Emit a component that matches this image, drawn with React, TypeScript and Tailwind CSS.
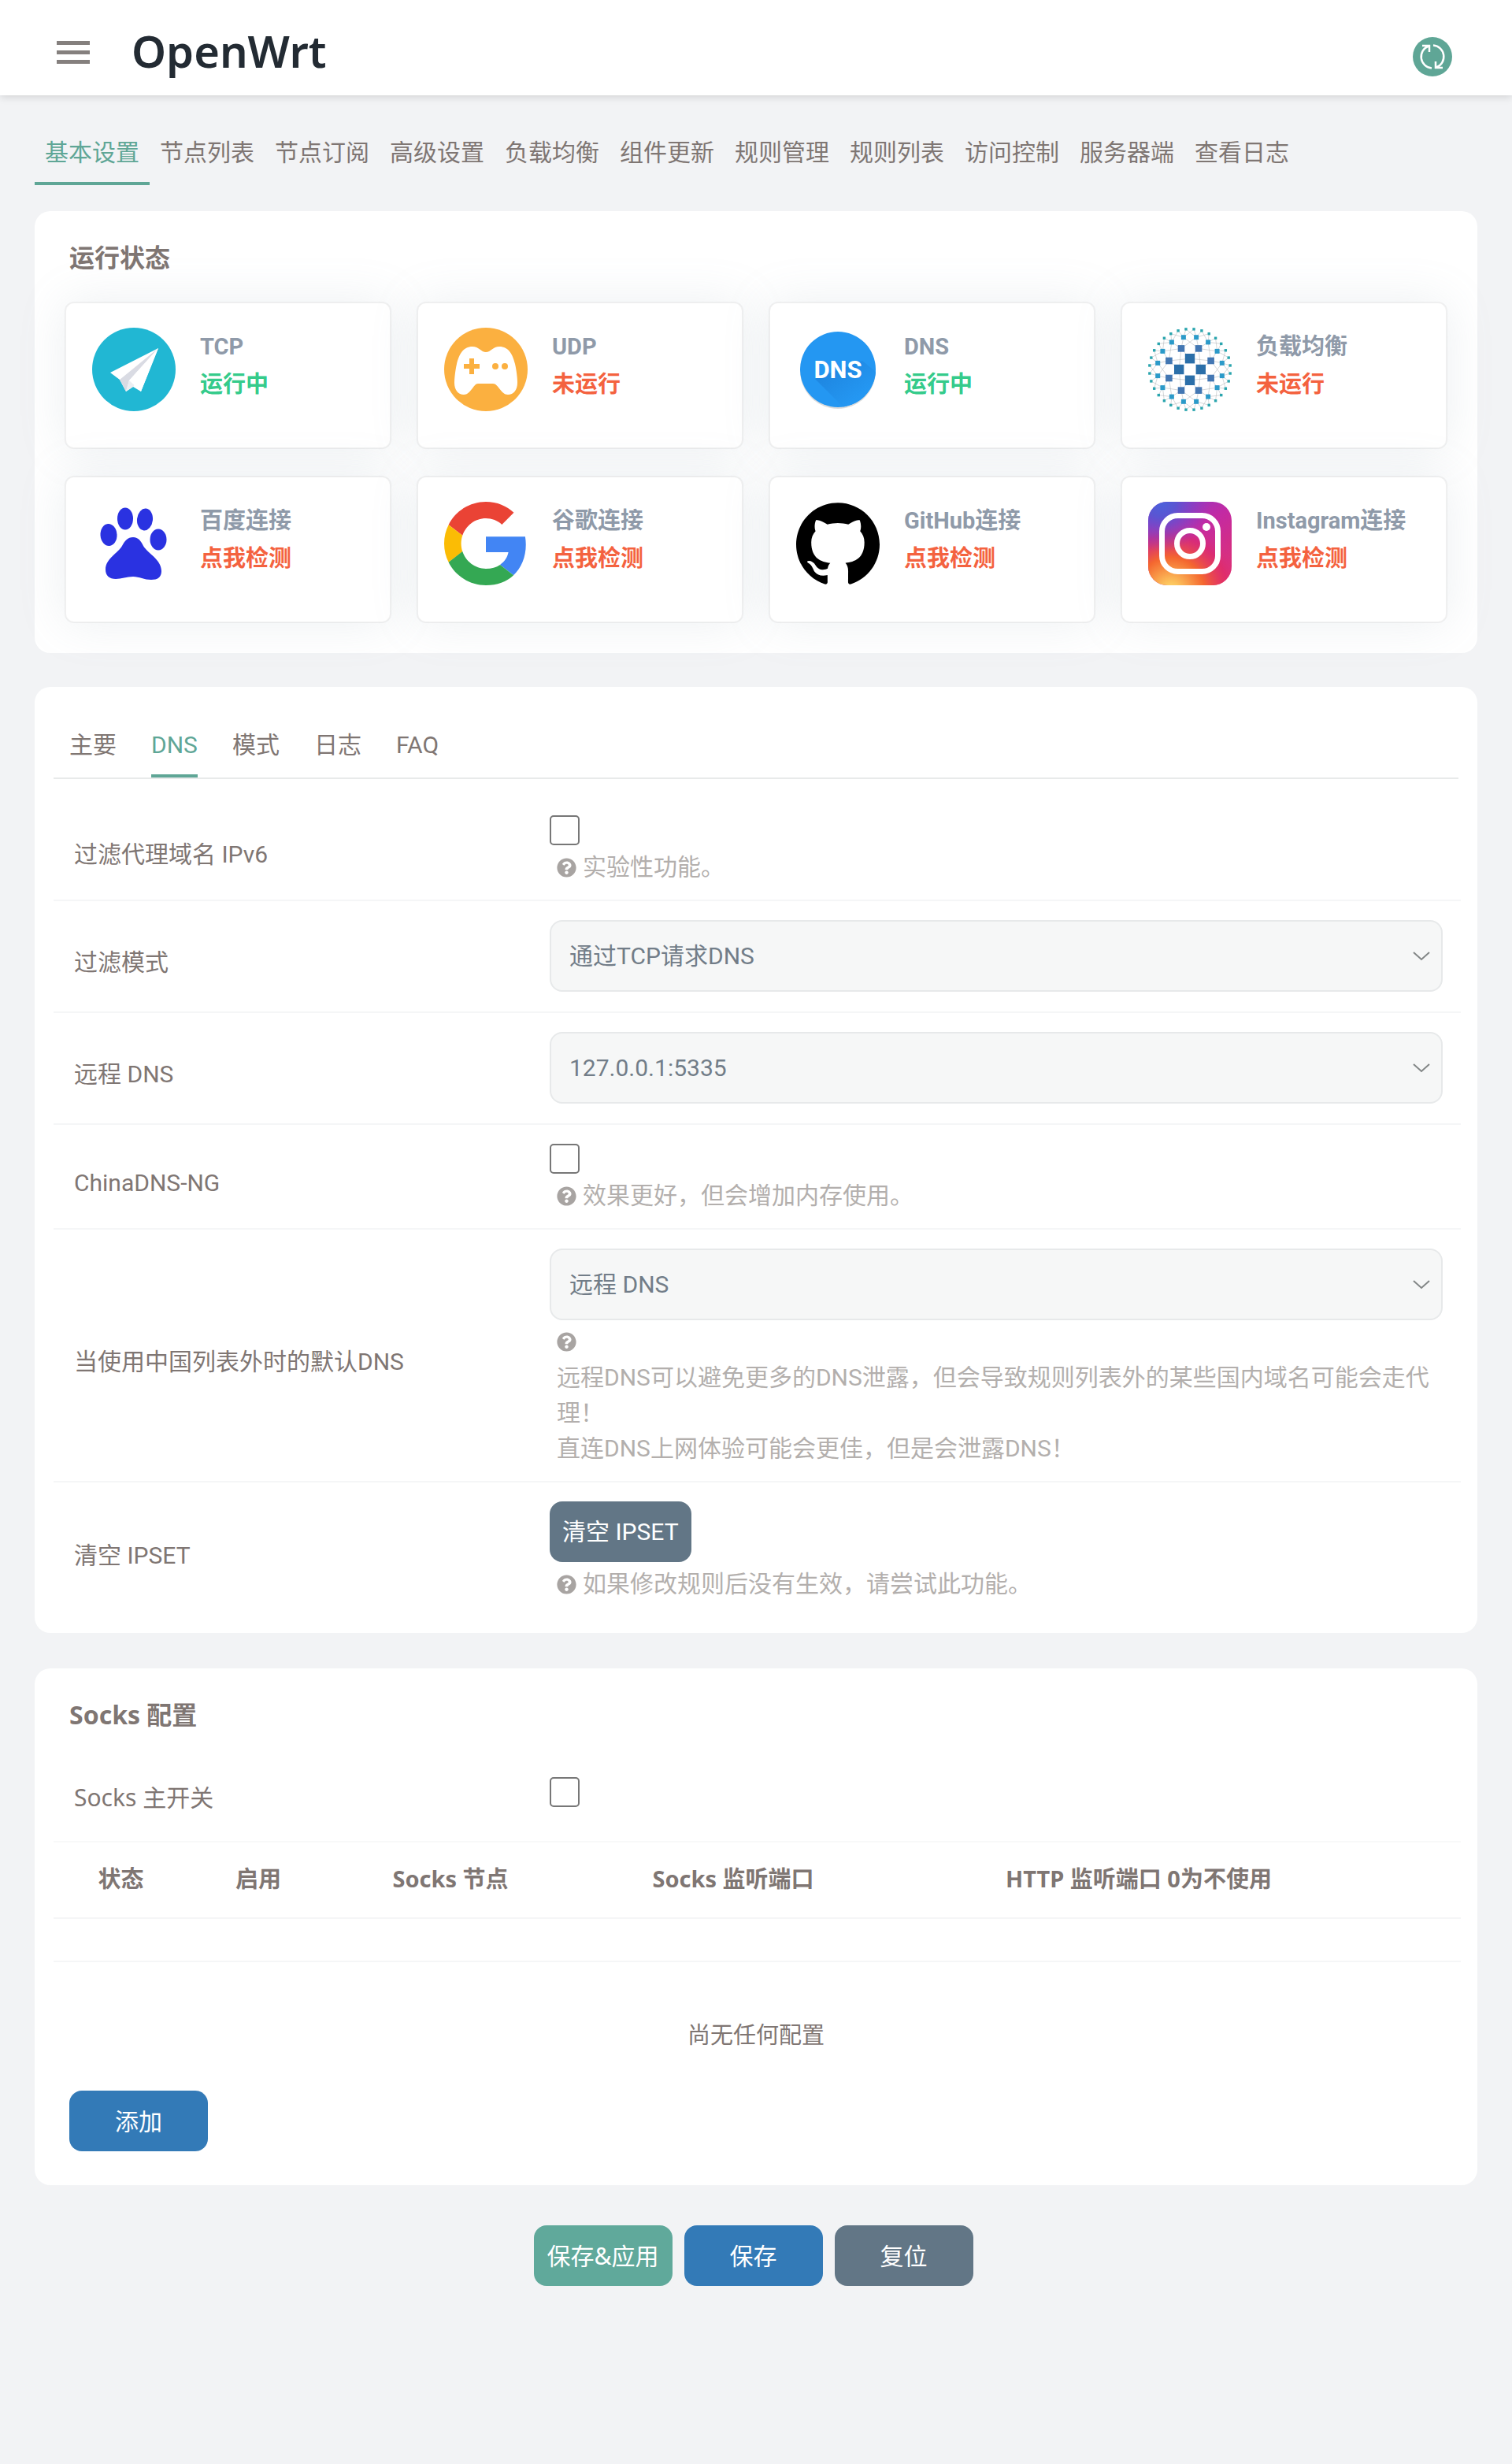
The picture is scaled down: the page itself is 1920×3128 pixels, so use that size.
import { useId, type ReactNode } from 'react';
import { FaQuestionCircle } from 'react-icons/fa';
import { SiGithub } from 'react-icons/si';

const NAV = ['基本设置', '节点列表', '节点订阅', '高级设置', '负载均衡', '组件更新', '规则管理', '规则列表', '访问控制', '服务器端', '查看日志'];
const TABS = ['主要', 'DNS', '模式', '日志', 'FAQ'];

function PlaneIcon() {
  return (
    <svg viewBox="0 0 106 106" className="size-full" aria-hidden="true">
      <circle cx="53" cy="53" r="53" fill="#21b7d3" />
      <path d="M84 26 23 57l12 9 8 15 9-6 10 6z" fill="#fff" />
      <path d="M84 26 35 66l8 15 4-14z" fill="#d9dbe3" />
      <path d="M84 26 47 67l-4 14 9-6z" fill="#eceef2" />
      <path d="M84 26 47 67l15 14z" fill="#fff" />
    </svg>
  );
}

function GamepadIcon() {
  return (
    <svg viewBox="0 0 106 106" className="size-full" aria-hidden="true">
      <circle cx="53" cy="53" r="53" fill="#fbb040" />
      <path
        d="M36 24c8 0 11 7 17 7s9-7 17-7c12 0 17 10 20 22 2 9 3 18 3 24 0 9-5 15-12 15-9 0-12-14-19-14H43c-6 0-9 14-18 14-7 0-12-6-12-15 0-6 1-15 3-24 3-12 8-22 20-22z"
        fill="#fff"
      />
      <path d="M32 39h6v7h7v6h-7v7h-6v-7h-7v-6h7z" fill="#fbb040" />
      <circle cx="65" cy="49" r="4" fill="#fbb040" />
      <circle cx="77" cy="49" r="4" fill="#fbb040" />
    </svg>
  );
}

function DnsIcon() {
  return (
    <svg viewBox="0 0 106 106" className="size-full" aria-hidden="true">
      <defs>
        <clipPath id="dns-clip">
          <circle cx="53" cy="53" r="48" />
        </clipPath>
        <linearGradient id="dns-shade" x1="0" y1="0" x2="1" y2="1">
          <stop offset="0" stopColor="#1c80da" />
          <stop offset=".7" stopColor="#2497f2" />
        </linearGradient>
      </defs>
      <circle cx="53" cy="55" r="48" fill="#000" opacity=".14" />
      <circle cx="53" cy="53" r="48" fill="#2497f2" />
      <path d="M24 65l40 40 42-20V60L84 42z" fill="url(#dns-shade)" clipPath="url(#dns-clip)" />
      <text x="53" y="64" textAnchor="middle" fontSize="31" fontWeight="700" fill="#fff" fontFamily="Roboto, sans-serif">
        DNS
      </text>
    </svg>
  );
}

const RINGS = [
  { count: 4, radius: 13.8, size: 12.4, color: '#2b6fa9', turn: 0 },
  { count: 8, radius: 28.8, size: 8.6, color: '#4377b3', turn: 0.5 },
  { count: 16, radius: 41.6, size: 6, color: '#2b9ac9', turn: 0.5 },
  { count: 32, radius: 51.4, size: 3.4, color: '#2aa5ae', turn: 0.5 },
];

function ringPoint(ring: number, index: number) {
  const r = RINGS[ring];
  const a = ((index + r.turn) / r.count) * Math.PI * 2;
  return { x: 53 + Math.cos(a) * r.radius, y: 53 + Math.sin(a) * r.radius };
}

function BalanceIcon() {
  const lines: ReactNode[] = [];
  RINGS.slice(0, 3).forEach((ring, k) => {
    for (let i = 0; i < ring.count; i++) {
      const from = ringPoint(k, i);
      const steps = k === 0 ? [-2, -1, 0, 1] : [-1, 0, 1, 2];
      steps.forEach((s) => {
        const to = ringPoint(k + 1, 2 * i + s);
        lines.push(<line key={`${k}-${i}-${s}`} x1={from.x} y1={from.y} x2={to.x} y2={to.y} />);
      });
    }
  });
  return (
    <svg viewBox="0 0 106 106" className="size-full" aria-hidden="true">
      <g stroke="#b9bcc0" strokeWidth=".6">{lines}</g>
      {RINGS.map((ring, k) =>
        Array.from({ length: ring.count }, (_, i) => {
          const p = ringPoint(k, i);
          return <rect key={`${k}-${i}`} x={p.x - ring.size / 2} y={p.y - ring.size / 2} width={ring.size} height={ring.size} fill={ring.color} />;
        }),
      )}
    </svg>
  );
}

function PawIcon() {
  return (
    <svg viewBox="0 0 106 106" className="size-full" fill="#2a32e1" aria-hidden="true">
      <ellipse cx="42" cy="21.500" rx="10" ry="14" />
      <ellipse cx="67" cy="22.500" rx="10" ry="14" transform="rotate(6 67 22.500)" />
      <ellipse cx="21" cy="42" rx="10.500" ry="14" transform="rotate(-4 21 42)" />
      <ellipse cx="84" cy="48" rx="10.500" ry="13.500" />
      <path d="M52 45c7 0 10 5 13 11 5 9 23 17 23 32 0 8-5 11-13 11-9 0-15-4-23-4s-15 3-22 3c-8 0-13-4-13-12 0-14 16-21 21-30 4-7 7-11 14-11z" />
    </svg>
  );
}

function GoogleIcon() {
  return (
    <svg viewBox="0 0 48 48" className="size-full" aria-hidden="true">
      <path fill="#ea4335" d="M24 9.5c3.54 0 6.71 1.22 9.21 3.6l6.85-6.85C35.9 2.38 30.47 0 24 0 14.62 0 6.51 5.38 2.56 13.22l7.98 6.19C12.43 13.72 17.74 9.5 24 9.5z" />
      <path fill="#4285f4" d="M46.98 24.55c0-1.57-.15-3.09-.38-4.55H24v9.02h12.94c-.58 2.96-2.26 5.48-4.78 7.18l7.73 6c4.51-4.18 7.09-10.36 7.09-17.65z" />
      <path fill="#fbbc05" d="M10.53 28.59c-.48-1.45-.76-2.99-.76-4.59s.27-3.14.76-4.59l-7.98-6.19C.92 16.46 0 20.12 0 24c0 3.88.92 7.54 2.56 10.78l7.97-6.19z" />
      <path fill="#34a853" d="M24 48c6.48 0 11.93-2.13 15.89-5.81l-7.73-6c-2.15 1.45-4.92 2.3-8.16 2.3-6.26 0-11.57-4.22-13.47-9.91l-7.98 6.19C6.51 42.62 14.62 48 24 48z" />
    </svg>
  );
}

function InstagramIcon() {
  return (
    <svg viewBox="0 0 106 106" className="size-full" aria-hidden="true">
      <defs>
        <linearGradient id="ig-base" x1=".2" y1="0" x2=".8" y2="1">
          <stop offset="0" stopColor="#8a3ac8" />
          <stop offset=".4" stopColor="#c32aa3" />
          <stop offset="1" stopColor="#e1306c" />
        </linearGradient>
        <radialGradient id="ig-warm" cx=".27" cy="1.07" r=".9">
          <stop offset="0" stopColor="#ffdd75" />
          <stop offset=".12" stopColor="#fcc35c" />
          <stop offset=".45" stopColor="#f4662f" />
          <stop offset=".75" stopColor="#e02a68" stopOpacity=".6" />
          <stop offset="1" stopColor="#c837ab" stopOpacity="0" />
        </radialGradient>
        <radialGradient id="ig-cool" cx=".15" cy="0" r=".6">
          <stop offset="0" stopColor="#4a62dc" />
          <stop offset=".3" stopColor="#5a55d2" />
          <stop offset="1" stopColor="#8a3ac8" stopOpacity="0" />
        </radialGradient>
      </defs>
      <rect width="106" height="106" rx="24" fill="url(#ig-base)" />
      <rect width="106" height="106" rx="24" fill="url(#ig-warm)" />
      <rect width="106" height="106" rx="24" fill="url(#ig-cool)" />
      <rect x="17.500" y="17.500" width="71" height="71" rx="20" fill="none" stroke="#fff" strokeWidth="7" />
      <circle cx="53" cy="53" r="16.500" fill="none" stroke="#fff" strokeWidth="7" />
      <circle cx="74" cy="32" r="5" fill="#fff" />
    </svg>
  );
}

function RefreshIcon() {
  return (
    <svg viewBox="-25 -25 50 50" className="size-full" fill="none" stroke="#fff" strokeWidth="2.500" aria-hidden="true">
      <path d="M-1 14.500A14.500 14.500 0 0 1-5-13.500M-13-14h9v8" />
      <path d="M1-14.500A14.500 14.500 0 0 1 5 13.500M13 14H4V6" />
    </svg>
  );
}

type Status = { name: string; value: string; ok?: boolean; action?: boolean; icon: ReactNode };

const STATUSES: Status[] = [
  { name: 'TCP', value: '运行中', ok: true, icon: <PlaneIcon /> },
  { name: 'UDP', value: '未运行', icon: <GamepadIcon /> },
  { name: 'DNS', value: '运行中', ok: true, icon: <DnsIcon /> },
  { name: '负载均衡', value: '未运行', icon: <BalanceIcon /> },
  { name: '百度连接', value: '点我检测', action: true, icon: <PawIcon /> },
  { name: '谷歌连接', value: '点我检测', action: true, icon: <GoogleIcon /> },
  { name: 'GitHub连接', value: '点我检测', action: true, icon: <SiGithub className="size-full text-black" aria-hidden="true" /> },
  { name: 'Instagram连接', value: '点我检测', action: true, icon: <InstagramIcon /> },
];

function StatusCard({ name, value, ok, action, icon }: Status) {
  return (
    <article className="flex h-[187px] min-w-0 gap-[31px] rounded-xl border-2 border-black/5 bg-white bg-clip-padding px-[33px] pt-[31px] text-[29px] leading-[48px] font-bold whitespace-nowrap shadow-[0_0_60px_rgba(136,152,170,0.15)]">
      <div className="size-[106px] shrink-0">{icon}</div>
      <div className="flex flex-col items-start">
        <h3 className="text-[#8f9aa9]">{name}</h3>
        {action ? (
          <button type="button" className="text-[#f4623f]">
            {value}
          </button>
        ) : (
          <p className={ok ? 'text-[#35cb8b]' : 'text-[#f4623f]'}>{value}</p>
        )}
      </div>
    </article>
  );
}

function Panel({ children, className = '' }: { children: ReactNode; className?: string }) {
  return <section className={`rounded-[20px] bg-white ${className}`}>{children}</section>;
}

function Row({ label, id, tall, last, children }: { label: string; id: string; tall?: boolean; last?: boolean; children: ReactNode }) {
  return (
    <div className={`flex items-center border-[#f5f6f7] pt-6 pr-[23px] ${last ? '' : 'border-b-2'} ${tall ? 'pb-[25px]' : 'pb-[19px]'}`}>
      <label htmlFor={id} className={`w-[630px] shrink-0 pl-[26px] leading-[45px] ${tall ? 'pt-4' : 'pt-[10px]'}`}>
        {label}
      </label>
      <div className="flex min-w-0 flex-1 flex-col items-start">{children}</div>
    </div>
  );
}

function Check({ id }: { id: string }) {
  return <input id={id} type="checkbox" className="block size-[38px] appearance-none rounded-[5px] border-2 border-[#777] bg-white checked:bg-[#5fa696]" />;
}

function Help({ children, block }: { children: ReactNode; block?: boolean }) {
  return (
    <div className="mt-[5px] pl-[9px] leading-[45px] text-[#b3afad]">
      <FaQuestionCircle className={`${block ? 'my-[10px] block' : 'mr-2 mb-1 inline'} size-[25px] text-[#a8a4a2]`} aria-hidden="true" />
      {children}
    </div>
  );
}

function Select({ id, value }: { id: string; value: string }) {
  return (
    <div className="relative w-full">
      <select id={id} defaultValue={value} className="h-[91px] w-full appearance-none rounded-2xl border-2 border-[#e7e9ea] bg-[#f6f7f7] pr-16 pl-[23px] text-[#727d88]">
        <option>{value}</option>
      </select>
      <svg viewBox="0 0 22 12" className="pointer-events-none absolute top-10 right-4 h-3 w-[22px]" fill="none" stroke="#828686" strokeWidth="2" aria-hidden="true">
        <path d="M1 1l10 9L21 1" />
      </svg>
    </div>
  );
}

function Button({ children, className, id }: { children: ReactNode; className: string; id?: string }) {
  return (
    <button id={id} type="button" className={`h-[77px] rounded-2xl whitespace-nowrap text-white ${className}`}>
      {children}
    </button>
  );
}

export default function App() {
  const uid = useId();
  return (
    <div className="min-h-screen bg-[#f2f3f5] pb-16 font-[Roboto,'Noto_Sans_CJK_SC',sans-serif] text-[30px] text-[#7f7673]">
      <header className="flex h-[121px] items-center bg-white pt-[11px] pr-[76px] pl-[72px] shadow-[0_2px_10px_rgba(0,0,0,0.14)]">
        <button type="button" aria-label="菜单" className="flex w-[42px] flex-col gap-[7px]">
          <span className="h-[5px] bg-[#85807e]" />
          <span className="h-[5px] bg-[#85807e]" />
          <span className="h-[5px] bg-[#85807e]" />
        </button>
        <a href="#home" className="-mt-1 ml-[53px] font-['Noto_Sans',sans-serif] text-[56px] leading-[80px] font-semibold text-[#232b33]">
          OpenWrt
        </a>
        <button type="button" aria-label="刷新" className="mt-3 ml-auto size-[50px] rounded-full bg-[#5fa696]">
          <RefreshIcon />
        </button>
      </header>

      <main className="px-11">
        <nav className="flex flex-wrap pt-[35px]">
          {NAV.map((item, i) => (
            <a
              key={item}
              href={`#nav-${i}`}
              className={`border-b-4 px-[13px] pt-[15px] pb-[15px] leading-[45px] whitespace-nowrap ${i === 0 ? 'border-[#5fa696] text-[#5fa696]' : 'border-transparent'}`}
            >
              {item}
            </a>
          ))}
        </nav>

        <Panel className="mt-[33px] px-[38px] pt-9 pb-[38px]">
          <h2 className="pl-[6px] text-[32px] leading-[48px] font-bold">运行状态</h2>
          <div className="mt-[31px] grid grid-cols-4 gap-x-8 gap-y-[34px]">
            {STATUSES.map((s) => (
              <StatusCard key={s.name} {...s} />
            ))}
          </div>
        </Panel>

        <Panel className="mt-[43px] px-6 pt-[38px] pb-[21px]">
          <div className="flex gap-11 border-b-2 border-[#e8eaea] px-5">
            {TABS.map((tab) => (
              <a
                key={tab}
                href={`#tab-${tab}`}
                className={`border-b-4 pt-[13px] pb-[15px] leading-[45px] ${tab === 'DNS' ? 'border-[#5fa696] text-[#5fa696]' : 'border-transparent'}`}
              >
                {tab}
              </a>
            ))}
          </div>
          <div className="mt-[22px] -mr-[3px]">
            <Row label="过滤代理域名 IPv6" id={`${uid}v6`}>
              <Check id={`${uid}v6`} />
              <Help>实验性功能。</Help>
            </Row>
            <Row label="过滤模式" id={`${uid}mode`} tall>
              <Select id={`${uid}mode`} value="通过TCP请求DNS" />
            </Row>
            <Row label="远程 DNS" id={`${uid}remote`} tall>
              <Select id={`${uid}remote`} value="127.0.0.1:5335" />
            </Row>
            <Row label="ChinaDNS-NG" id={`${uid}ng`}>
              <Check id={`${uid}ng`} />
              <Help>效果更好，但会增加内存使用。</Help>
            </Row>
            <Row label="当使用中国列表外时的默认DNS" id={`${uid}default`}>
              <Select id={`${uid}default`} value="远程 DNS" />
              <Help block>
                远程DNS可以避免更多的DNS泄露，但会导致规则列表外的某些国内域名可能会走代理！
                <br />
                直连DNS上网体验可能会更佳，但是会泄露DNS！
              </Help>
            </Row>
            <Row label="清空 IPSET" id={`${uid}ipset`} last>
              <Button id={`${uid}ipset`} className="bg-[#627686] px-4">
                清空 IPSET
              </Button>
              <Help>如果修改规则后没有生效，请尝试此功能。</Help>
            </Row>
          </div>
        </Panel>

        <Panel className="mt-[45px] px-6 pt-[35px] pb-[43px] font-['Noto_Sans','Noto_Sans_CJK_SC',sans-serif]">
          <h2 className="pl-5 text-[32px] leading-[48px] font-bold">Socks 配置</h2>
          <div className="-mr-[3px]">
            <div className="mt-[31px] flex items-center border-b-2 border-[#f8f9f9] pt-6 pb-[43px]">
              <label htmlFor={`${uid}socks`} className="w-[630px] pt-[13px] pl-[26px] leading-[25px]">
                Socks 主开关
              </label>
              <Check id={`${uid}socks`} />
            </div>
            <table className="w-full table-fixed text-[29px]">
              <colgroup>
                <col className="w-[171px]" />
                <col className="w-[178px]" />
                <col className="w-[310px]" />
                <col className="w-[408px]" />
                <col className="w-[622px]" />
                <col />
              </colgroup>
              <thead>
                <tr className="h-[96px] border-b-2 border-[#f5f6f7] leading-[44px] *:pb-1">
                  <th>状态</th>
                  <th>启用</th>
                  <th>Socks 节点</th>
                  <th>Socks 监听端口</th>
                  <th>HTTP 监听端口 0为不使用</th>
                  <th />
                </tr>
              </thead>
              <tbody>
                <tr className="h-[55px] border-b-2 border-[#f5f6f7]">
                  <td colSpan={6} />
                </tr>
              </tbody>
            </table>
          </div>
          <p className="mt-[70px] text-center text-[29px] leading-[44px]">尚无任何配置</p>
          <div className="mt-[49px] pl-5">
            <Button className="w-44 bg-[#337ab7]">添加</Button>
          </div>
        </Panel>

        <div className="mt-[51px] mr-[7px] flex justify-center gap-[15px] font-['Noto_Sans','Noto_Sans_CJK_SC',sans-serif]">
          <Button className="w-44 bg-[#60a99b]">保存&amp;应用</Button>
          <Button className="w-44 bg-[#337ab7]">保存</Button>
          <Button className="w-44 bg-[#627686]">复位</Button>
        </div>
      </main>
    </div>
  );
}
